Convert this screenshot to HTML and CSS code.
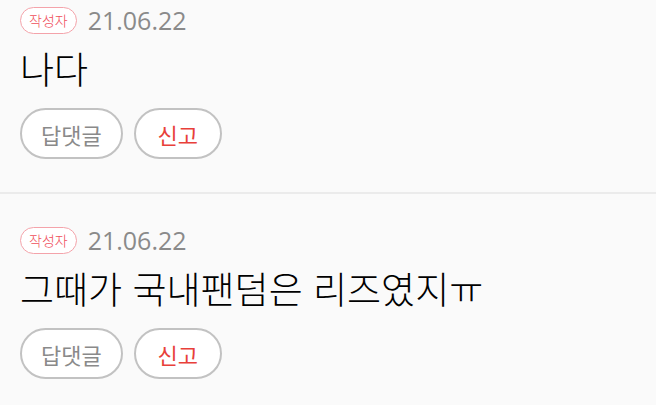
FILE: index.html
```html
<!DOCTYPE html>
<html lang="ko">
<head>
    <meta charset="UTF-8">
    <meta name="viewport" content="width=device-width, initial-scale=1.0">
    <title>댓글</title>
    <link rel="stylesheet" href="styles.css">
</head>
<body>
    <ul class="comment-list">
        <li class="comment">
            <div class="comment-meta">
                <span class="badge">작성자</span>
                <span class="date">21.06.22</span>
            </div>
            <p class="comment-text">나다</p>
            <div class="comment-actions">
                <button class="pill">답댓글</button>
                <button class="pill pill-report">신고</button>
            </div>
        </li>
        <li class="comment">
            <div class="comment-meta">
                <span class="badge">작성자</span>
                <span class="date">21.06.22</span>
            </div>
            <p class="comment-text">그때가 국내팬덤은 리즈였지ㅠ</p>
            <div class="comment-actions">
                <button class="pill">답댓글</button>
                <button class="pill pill-report">신고</button>
            </div>
        </li>
    </ul>
</body>
</html>
```

FILE: styles.css
```css
body {
    margin: 0;
    background-color: #fafafa;
    font-family: "Noto Sans CJK KR", "Noto Sans", sans-serif;
    color: #000;
}
.comment-list {
    list-style: none;
    margin: 0;
    padding: 0;
}
.comment {
    padding: 32px 20px 33px;
    border-bottom: 2px solid #ebebeb;
}
.comment:first-child {
    padding-top: 6px; /* 스크롤된 상태 */
}
.comment-meta {
    display: flex;
    align-items: center;
    gap: 11px;
    height: 28px;
}
.badge {
    display: inline-flex;
    align-items: center;
    justify-content: center;
    height: 25px;
    padding: 0 8px;
    border: 1px solid #f4a3aa;
    border-radius: 14px;
    background: #fff;
    color: #ef4f5b;
    font-size: 14px;
    font-weight: 300;
}
.date {
    color: #8a8a8a;
    font-size: 25px;
    font-family: "Open Sans", "Noto Sans", sans-serif;
}
.comment-text {
    margin: 10px 0 16px;
    font-size: 37px;
    font-weight: 300;
    line-height: 48px;
}
.comment-actions {
    display: flex;
    gap: 11px;
}
.pill {
    height: 51px;
    min-width: 88px;
    padding: 0 19px;
    border: 2px solid #c2c2c2;
    border-radius: 26px;
    background: #fff;
    color: #8a8a8a;
    font-family: inherit;
    font-size: 22px;
}
.pill-report {
    color: #e8403a;
}
```
